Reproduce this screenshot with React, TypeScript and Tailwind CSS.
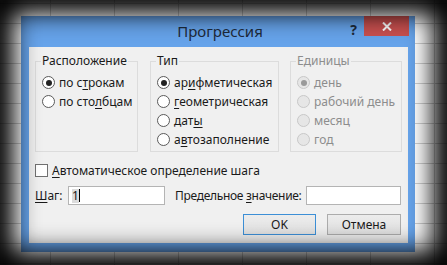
import React from "react";

const font = { fontFamily: '"Segoe UI", "Noto Sans", "Open Sans", sans-serif' };

function Radio({ checked, disabled }: { checked?: boolean; disabled?: boolean }) {
  return (
    <span
      className={
        "flex h-[13px] w-[13px] shrink-0 items-center justify-center rounded-full border " +
        (disabled ? "border-[#c8c8c8] bg-[#e6e6e6]" : "border-[#5a5a5a] bg-white")
      }
    >
      {checked && (
        <span
          className={
            "h-[6px] w-[6px] rounded-full " + (disabled ? "bg-[#9a9a9a]" : "bg-[#222]")
          }
        />
      )}
    </span>
  );
}

function Row({
  children,
  checked,
  disabled,
}: {
  children: React.ReactNode;
  checked?: boolean;
  disabled?: boolean;
}) {
  return (
    <div className="flex h-[19px] items-center gap-[4px] whitespace-nowrap">
      <Radio checked={checked} disabled={disabled} />
      <span className={disabled ? "text-[#8d8d8d]" : "text-[#1a1a1a]"}>{children}</span>
    </div>
  );
}

function Group({
  title,
  width,
  disabled,
  children,
}: {
  title: string;
  width: string;
  disabled?: boolean;
  children: React.ReactNode;
}) {
  return (
    <div className={"relative h-[91px] border border-[#dcdcdc] " + width}>
      <span
        className={
          "absolute left-[5px] top-[-9px] bg-[#f0f0f0] px-[1px] leading-[16px] " +
          (disabled ? "text-[#8d8d8d]" : "text-[#1a1a1a]")
        }
      >
        {title}
      </span>
      <div className="flex flex-col pl-[6px] pt-[11px]">{children}</div>
    </div>
  );
}

const U = ({ children }: { children: React.ReactNode }) => (
  <span className="underline underline-offset-2">{children}</span>
);

export default function App() {
  return (
    <div
      className="relative h-[265px] w-[447px] overflow-hidden bg-white bg-[linear-gradient(to_right,#cfcfcf_1px,transparent_1px),linear-gradient(to_bottom,#cfcfcf_1px,transparent_1px)] bg-[size:64px_20px] bg-[position:50px_3px] text-[12px]"
      style={font}
    >
      <div className="pl-[21px] pt-[16px]">
        <div className="flex h-[236px] w-[394px] flex-col bg-[#66a3ea]">
          <div className="relative flex h-[31px] items-center justify-center">
            <span className="pl-[4px] text-[15px] text-[#1d2a3a]">Прогрессия</span>
            <span className="absolute right-[58px] top-[3px] text-[14px] font-bold text-[#1d2a3a]">
              ?
            </span>
            <div className="absolute right-[6px] top-0 flex h-[20px] w-[45px] items-center justify-center bg-[#c9504f]">
              <svg width="10" height="9" viewBox="0 0 10 9">
                <path d="M1 0.5 L9 8.5 M9 0.5 L1 8.5" stroke="white" strokeWidth="2" />
              </svg>
            </div>
          </div>
          <div className="ml-[8px] mr-[7px] flex h-[196px] flex-col bg-[#f0f0f0] pl-[6px] pt-[14px]">
            <div className="flex gap-[11px]">
              <Group title="Расположение" width="w-[103px]">
                <Row checked>
                  по с<U>т</U>рокам
                </Row>
                <Row>
                  по сто<U>л</U>бцам
                </Row>
              </Group>
              <div className="ml-[1px]">
                <Group title="Тип" width="w-[129px]">
                  <Row checked>
                    ар<U>и</U>фметическая
                  </Row>
                  <Row>
                    <U>г</U>еометрическая
                  </Row>
                  <Row>
                    дат<U>ы</U>
                  </Row>
                  <Row>
                    а<U>в</U>тозаполнение
                  </Row>
                </Group>
              </div>
              <Group title="Единицы" width="w-[112px]" disabled>
                <Row checked disabled>
                  день
                </Row>
                <Row disabled>рабочий день</Row>
                <Row disabled>месяц</Row>
                <Row disabled>год</Row>
              </Group>
            </div>
            <div className="mt-[12px] flex h-[13px] items-center gap-[4px] whitespace-nowrap text-[#1a1a1a]">
              <span className="h-[13px] w-[13px] border border-[#707070] bg-white" />
              <span>
                <U>А</U>втоматическое определение шага
              </span>
            </div>
            <div className="mt-[9px] flex h-[19px] items-center whitespace-nowrap pr-[7px] text-[#1a1a1a]">
              <span className="w-[33px]">
                <U>Ш</U>аг:
              </span>
              <div className="flex h-[19px] w-[97px] items-center border border-[#b4b4b4] bg-white pl-[3px]">
                <span className="bg-[#dcdcdc] leading-[14px]">1</span>
                <span className="h-[13px] w-[1px] bg-black" />
              </div>
              <span className="ml-[10px] tracking-[-0.3px]">
                Предельное <U>з</U>начение:
              </span>
              <div className="ml-auto h-[19px] w-[95px] border border-[#b4b4b4] bg-white" />
            </div>
            <div className="mt-[9px] flex justify-end gap-[11px] pr-[7px]">
              <button className="h-[21px] w-[73px] border border-[#3c8fd6] bg-[linear-gradient(#ececec,#e2e2e2)] text-[#1a1a1a]">
                OK
              </button>
              <button className="h-[21px] w-[74px] border border-[#acacac] bg-[linear-gradient(#ececec,#e0e0e0)] text-[#1a1a1a]">
                Отмена
              </button>
            </div>
          </div>
        </div>
      </div>
      <div className="pointer-events-none absolute inset-0 shadow-[inset_0_0_24px_14px_#000]" />
    </div>
  );
}
